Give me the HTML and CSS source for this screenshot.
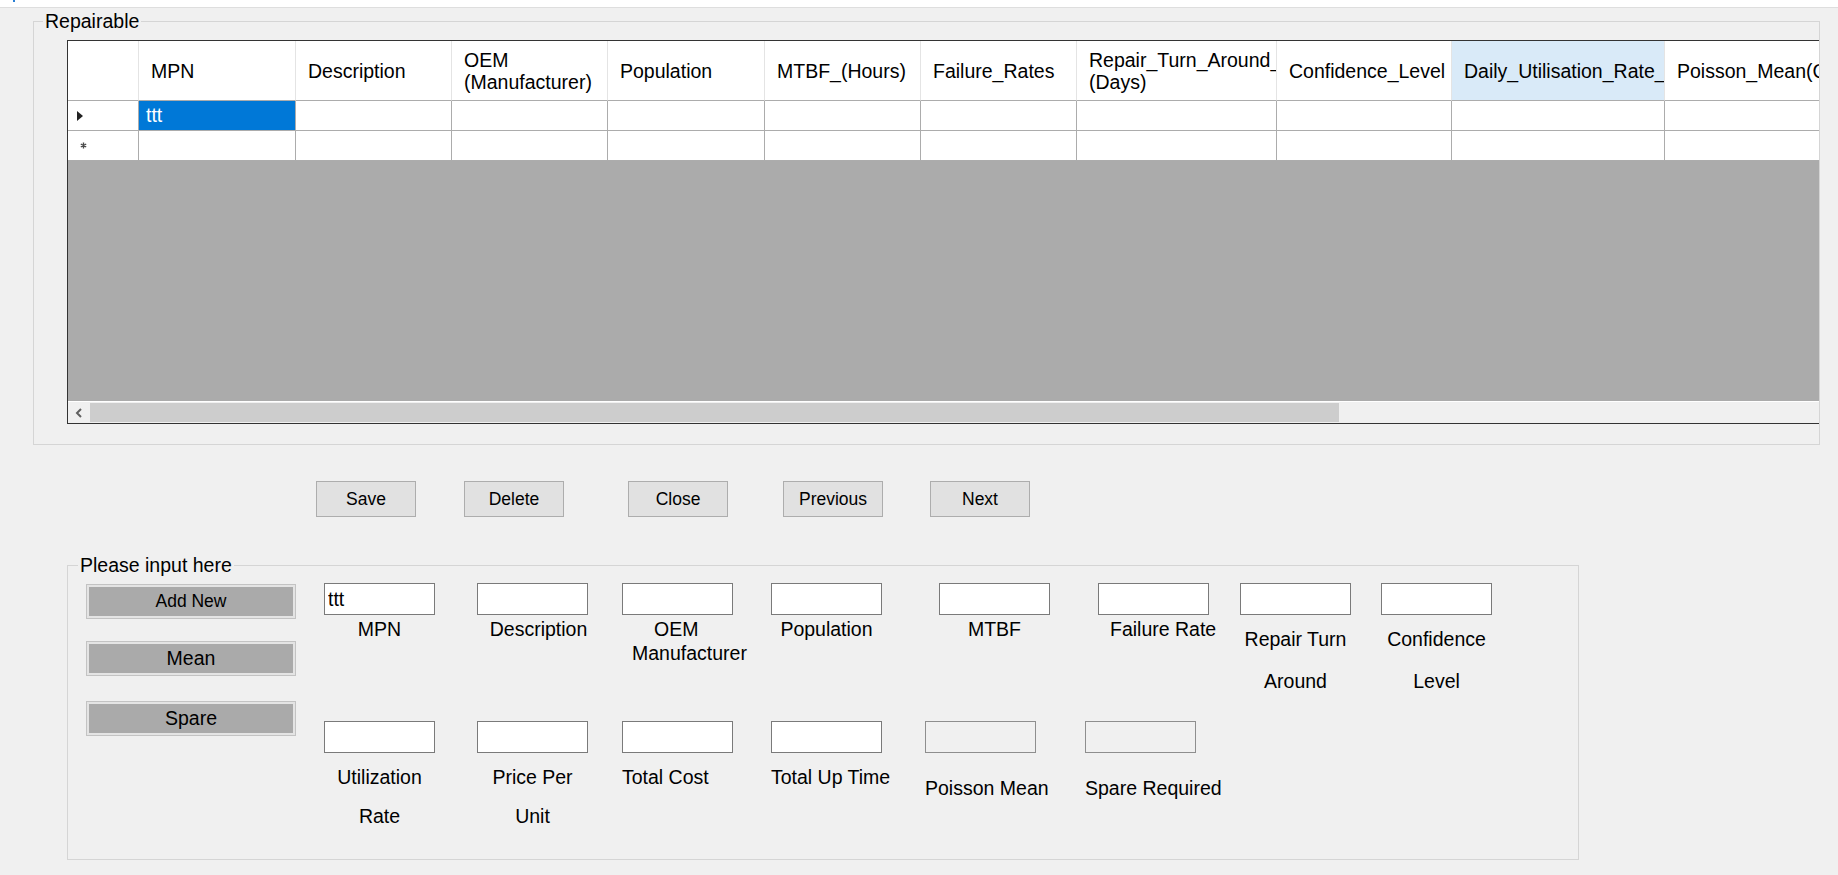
FILE: index.html
```html
<!DOCTYPE html>
<html>
    <head>
        <meta http-equiv='Content-Type' content='text/html; charset=UTF-8'>
        <title>Repairable</title>
        <link rel="stylesheet" href="styles.css">
    </head>
    <body>
        <div class='titlebar'><span class='tick'></span></div>

        <fieldset class='group group-top'>
            <legend>Repairable</legend>
            <div class='grid'>
                <table class='sheet'>
                    <colgroup>
                        <col class='w71'>
                        <col class='w157'>
                        <col class='w156'>
                        <col class='w156'>
                        <col class='w157'>
                        <col class='w156'>
                        <col class='w156'>
                        <col class='w200'>
                        <col class='w175'>
                        <col class='w213'>
                        <col class='w211'>
                    </colgroup>
                    <tr>
                        <th class='corner'></th>
                        <th>MPN</th>
                        <th>Description</th>
                        <th>OEM<br>(Manufacturer)</th>
                        <th>Population</th>
                        <th>MTBF_(Hours)</th>
                        <th>Failure_Rates</th>
                        <th>Repair_Turn_Around_<br>(Days)</th>
                        <th>Confidence_Level</th>
                        <th class='active'>Daily_Utilisation_Rate_(Hours)</th>
                        <th>Poisson_Mean(Calc)</th>
                    </tr>
                    <tr>
                        <td class='rowhead'><span class='pointer'></span></td>
                        <td class='sel'>ttt</td>
                        <td></td><td></td><td></td><td></td><td></td><td></td><td></td><td></td><td></td>
                    </tr>
                    <tr>
                        <td class='rowhead star'>
                            <svg width='7' height='7' viewBox='0 0 7 7'>
                                <path d='M3.5 0.5v6M0.8 2l5.4 3M0.8 5l5.4-3' stroke='#4a4a4a' stroke-width='1.4'/>
                            </svg>
                        </td>
                        <td></td><td></td><td></td><td></td><td></td><td></td><td></td><td></td><td></td><td></td>
                    </tr>
                </table>
                <div class='void'></div>
                <div class='hscroll'>
                    <div class='scroll-left'>
                        <svg width='8' height='10' viewBox='0 0 8 10'>
                            <polyline points='6,1 2,5 6,9' fill='none' stroke='#606060' stroke-width='2'/>
                        </svg>
                    </div>
                    <div class='thumb'></div>
                </div>
            </div>
        </fieldset>

        <div class='actions'>
            <button class='btn'>Save</button>
            <button class='btn btn-delete'>Delete</button>
            <button class='btn btn-close'>Close</button>
            <button class='btn btn-prev'>Previous</button>
            <button class='btn btn-next'>Next</button>
        </div>

        <fieldset class='group group-input'>
            <legend>Please input here</legend>
            <div class='inputs'>
                <div class='side'>
                    <button class='tool tool-add'>Add New</button>
                    <button class='tool tool-mean'>Mean</button>
                    <button class='tool tool-spare'>Spare</button>
                </div>
                <div class='fields'>
                    <div class='row-a'>
                        <label class='field'><input type='text' value='ttt'><span class='cap'>MPN</span></label>
                        <label class='field'><input type='text'><span class='cap nudge'>Description</span></label>
                        <label class='field'><input type='text'><span class='cap left oem'><span class='oem-top'>OEM</span><br>Manufacturer</span></label>
                        <label class='field'><input type='text'><span class='cap'>Population</span></label>
                        <label class='field'><input type='text'><span class='cap'>MTBF</span></label>
                        <label class='field'><input type='text'><span class='cap nudge'>Failure Rate</span></label>
                        <label class='field'><input type='text'><span class='cap tall'>Repair Turn<br>Around</span></label>
                        <label class='field'><input type='text'><span class='cap tall'>Confidence<br>Level</span></label>
                    </div>
                    <div class='row-b'>
                        <label class='field'><input type='text'><span class='cap'>Utilization<br>Rate</span></label>
                        <label class='field'><input type='text'><span class='cap'>Price Per<br>Unit</span></label>
                        <label class='field'><input type='text'><span class='cap left'>Total Cost</span></label>
                        <label class='field'><input type='text'><span class='cap left'>Total Up Time</span></label>
                        <label class='field'><input type='text' disabled><span class='cap left low'>Poisson Mean</span></label>
                        <label class='field'><input type='text' disabled><span class='cap left low'>Spare Required</span></label>
                    </div>
                </div>
            </div>
        </fieldset>
    </body>
</html>
```

FILE: styles.css
```css
html {
    background: #f0f0f0;
}
body {
    margin: 0;
    font-family: "Liberation Sans", Arial, sans-serif;
    font-size: 19.5px;
    color: #000;
}
.titlebar {
    height: 7px;
    background: #fff;
    border-bottom: 1px solid #dedede;
}
.tick {
    display: block;
    width: 2px;
    height: 2px;
    margin-left: 13px;
    background: #2a7fd4;
}

/* group boxes */
.group {
    margin: 0;
    padding: 0;
    min-width: 0;
    border: 1px solid #d5d5d5;
}
.group legend {
    padding: 0 2px;
    line-height: 22px;
}
.group-top {
    margin: 2px 18px 0 33px;
    padding: 8px 0 20px 0;
}
.group-top legend {
    margin-left: 9px;
}
.group-input {
    box-sizing: border-box;
    width: 1512px;
    margin: 37px 0 0 67px;
}
.group-input legend {
    margin-left: 10px;
}

/* data grid */
.grid {
    margin-left: 33px;
    height: 382px;
    border: 1px solid #333;
    border-right: 0;
    background: #ababab;
    overflow: hidden;
    display: flex;
    flex-direction: column;
}
.sheet {
    flex: none;
    table-layout: fixed;
    width: 1808px;
    border-collapse: separate;
    border-spacing: 0;
    background: #fff;
}
.w71 { width: 71px; }
.w156 { width: 156px; }
.w157 { width: 157px; }
.w175 { width: 175px; }
.w200 { width: 200px; }
.w211 { width: 211px; }
.w213 { width: 213px; }
.sheet th {
    box-sizing: border-box;
    height: 60px;
    padding: 0 0 0 12px;
    text-align: left;
    font-weight: normal;
    line-height: 22px;
    white-space: nowrap;
    overflow: hidden;
    border-right: 1px solid #e4e4e4;
    border-bottom: 1px solid #acacac;
}
.sheet th.corner {
    padding: 0;
}
.sheet th.active {
    background: #d9eaf8;
}
.sheet td {
    box-sizing: border-box;
    height: 30px;
    padding: 0 0 0 7px;
    white-space: nowrap;
    overflow: hidden;
    border-right: 1px solid #acacac;
    border-bottom: 1px solid #acacac;
}
.sheet td.rowhead {
    padding-left: 9px;
}
.sheet td.star {
    padding-left: 12px;
}
.sheet td.star svg {
    display: block;
}
.sheet td.sel {
    background: #0078d7;
    color: #fff;
}
.pointer {
    display: block;
    width: 0;
    height: 0;
    border-left: 6px solid #222;
    border-top: 5px solid transparent;
    border-bottom: 5px solid transparent;
}
.void {
    flex: 1;
}
.hscroll {
    flex: none;
    display: flex;
    height: 21px;
    border-top: 1px solid #fff;
    background: #f0f0f0;
}
.scroll-left {
    width: 22px;
    display: flex;
    align-items: center;
    justify-content: center;
}
.thumb {
    width: 1249px;
    margin: 1px 0;
    background: #cdcdcd;
}

/* navigation buttons */
.actions {
    display: flex;
    margin-top: 36px;
    padding-left: 316px;
}
.btn {
    width: 100px;
    height: 36px;
    padding: 0;
    font: inherit;
    font-size: 17.5px;
    color: #000;
    background: #e1e1e1;
    border: 1px solid #adadad;
}
.btn-delete { margin-left: 48px; }
.btn-close { margin-left: 64px; }
.btn-prev { margin-left: 55px; }
.btn-next { margin-left: 47px; }

/* input panel */
.inputs {
    display: flex;
    height: 276px;
    padding: 7px 0 0 18px;
}
.side {
    display: flex;
    flex-direction: column;
    width: 210px;
}
.tool {
    width: 210px;
    height: 35px;
    padding: 0;
    font: inherit;
    color: #000;
    background: #aaa;
    border: 1px solid #c3c3c3;
    box-shadow: inset 0 0 0 2px #e4e4e4;
}
.tool-add {
    margin-top: 1px;
    font-size: 17.5px;
}
.tool-mean { margin-top: 22px; }
.tool-spare { margin-top: 25px; }

.fields {
    margin-left: 28px;
}
.row-a {
    display: grid;
    grid-template-columns: 153px 145px 149px 168px 159px 142px 141px 111px;
    height: 138px;
}
.row-b {
    display: grid;
    grid-template-columns: 153px 145px 149px 154px 160px 111px;
}
.field {
    display: block;
}
.field input {
    display: block;
    box-sizing: border-box;
    width: 111px;
    height: 32px;
    margin: 0;
    padding: 0 3px;
    font: inherit;
    color: #000;
    background: #fff;
    border: 1px solid #7a7a7a;
    outline: none;
}
.field input:disabled {
    background: #f0f0f0;
    border-color: #8e8e8e;
}
.cap {
    display: block;
    box-sizing: border-box;
    width: 111px;
    margin-top: 2px;
    line-height: 24px;
    text-align: center;
    white-space: nowrap;
}
.cap.nudge {
    padding-left: 12px;
}
.cap.tall {
    margin-top: 3px;
    line-height: 42px;
}
.row-b .cap {
    margin-top: 5px;
    line-height: 39px;
}
.row-b .cap.low {
    margin-top: 16px;
}
.cap.left {
    text-align: left;
}
.cap.oem {
    padding-left: 10px;
}
.oem-top {
    margin-left: 22px;
}
```
